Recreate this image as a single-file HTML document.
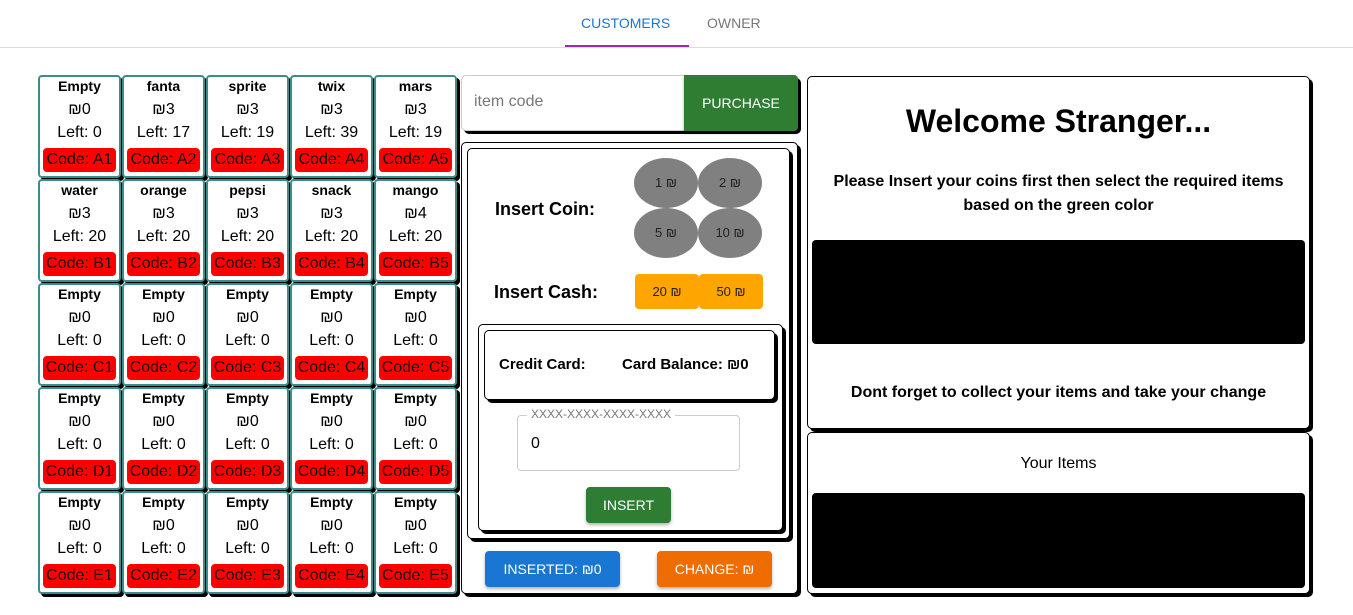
<!DOCTYPE html>
<html><head><meta charset="utf-8"><style>
*{box-sizing:border-box;margin:0;padding:0}
body{width:1353px;height:615px;background:#fff;font-family:"Liberation Sans",Arial,sans-serif;position:relative;overflow:hidden;color:#000}
.a{position:absolute}
.card{position:absolute;width:83px;height:103px;border:2px solid #3c8c8c;border-radius:4px;box-shadow:3px 3px 0 #000;background:#fff;text-align:center}
.card .t{position:absolute;top:1px;left:0;right:0;font-weight:bold;font-size:14px}
.card .p{position:absolute;top:24px;left:0;right:0;font-size:16px}
.card .l{position:absolute;top:47px;left:0;right:0;font-size:16px}
.card .c{position:absolute;top:71px;left:3px;right:3px;height:24px;background:#f00;border-radius:4px;font-size:16px;line-height:24px;color:#111;white-space:nowrap;overflow:hidden}
.box{position:absolute;border:1.5px solid #000;border-radius:5px;box-shadow:3px 3px 0 #000;background:#fff}
.coin{position:absolute;width:64px;height:50px;border-radius:50%;background:#808080;font-size:13px;text-align:center;line-height:50px;color:#222}
.cash{position:absolute;width:64px;height:35px;border-radius:4px;background:#ffa500;font-size:13px;text-align:center;line-height:35px;color:#222}
.btn{position:absolute;color:#fff;font-size:14px;text-align:center;border-radius:4px;box-shadow:0 2px 3px rgba(0,0,0,.3)}
</style></head><body>
<div class="a" style="left:581px;top:15px;font-size:14px;color:#1976d2">CUSTOMERS</div>
<div class="a" style="left:707px;top:15px;font-size:14px;color:#777">OWNER</div>
<div class="a" style="left:565px;top:45px;width:124px;height:2px;background:#9c27b0"></div>
<div class="a" style="left:0;top:47px;width:1353px;height:1px;background:#ddd"></div>

<div id="grid"></div>

<div class="box" style="left:461px;top:75px;width:337px;height:56px;border-width:1px;border-color:#ccc"></div>
<div class="a" style="left:474px;top:93px;font-size:16px;color:#777">item code</div>
<div class="btn" style="left:684px;top:75px;width:114px;height:56px;background:#2e7d32;line-height:56px;border-radius:0 4px 4px 0">PURCHASE</div>

<div class="box" style="left:461px;top:142px;width:337px;height:452px"></div>
<div class="box" style="left:467px;top:148px;width:323px;height:391px"></div>
<div class="a" style="left:495px;top:199px;font-size:18px;font-weight:bold">Insert Coin:</div>
<div class="coin" style="left:634px;top:158px">1 ₪</div>
<div class="coin" style="left:698px;top:158px">2 ₪</div>
<div class="coin" style="left:634px;top:208px">5 ₪</div>
<div class="coin" style="left:698px;top:208px">10 ₪</div>
<div class="a" style="left:494px;top:282px;font-size:18px;font-weight:bold">Insert Cash:</div>
<div class="cash" style="left:635px;top:274px">20 ₪</div>
<div class="cash" style="left:699px;top:274px">50 ₪</div>
<div class="box" style="left:478px;top:324px;width:305px;height:207px"></div>
<div class="box" style="left:484px;top:330px;width:291px;height:70px"></div>
<div class="a" style="left:499px;top:356px;font-size:15px;font-weight:bold">Credit Card:</div>
<div class="a" style="left:622px;top:356px;font-size:15px;font-weight:bold">Card Balance: ₪0</div>
<div class="a" style="left:517px;top:415px;width:223px;height:56px;border:1px solid #ccc;border-radius:4px"></div>
<div class="a" style="left:527px;top:407px;font-size:12px;color:#777;background:#fff;padding:0 4px">XXXX-XXXX-XXXX-XXXX</div>
<div class="a" style="left:531px;top:435px;font-size:16px">0</div>
<div class="btn" style="left:586px;top:487px;width:85px;height:36px;background:#2e7d32;line-height:36px">INSERT</div>
<div class="btn" style="left:485px;top:551px;width:135px;height:36px;background:#1976d2;line-height:36px">INSERTED: ₪0</div>
<div class="btn" style="left:657px;top:551px;width:115px;height:36px;background:#ef6c00;line-height:36px">CHANGE: ₪</div>

<div class="box" style="left:807px;top:76px;width:503px;height:353px"></div>
<div class="a" style="left:807px;top:103px;width:503px;text-align:center;font-size:32px;font-weight:bold">Welcome Stranger...</div>
<div class="a" style="left:820px;top:170px;width:477px;text-align:center;font-size:16px;font-weight:bold;line-height:24px">Please Insert your coins first then select the required items based on the green color</div>
<div class="a" style="left:812px;top:240px;width:493px;height:104px;background:#000;border-radius:4px"></div>
<div class="a" style="left:807px;top:384px;width:503px;text-align:center;font-size:16px;font-weight:bold">Dont forget to collect your items and take your change</div>
<div class="box" style="left:807px;top:432px;width:503px;height:162px"></div>
<div class="a" style="left:807px;top:455px;width:503px;text-align:center;font-size:16px">Your Items</div>
<div class="a" style="left:812px;top:493px;width:493px;height:95px;background:#000;border-radius:4px"></div>

<script>
var d=[["Empty",0,0],["fanta",3,17],["sprite",3,19],["twix",3,39],["mars",3,19],
["water",3,20],["orange",3,20],["pepsi",3,20],["snack",3,20],["mango",4,20]];
var h="",rows="ABCDE";
for(var r=0;r<5;r++)for(var c=0;c<5;c++){var it=d[r*5+c]||["Empty",0,0];
h+='<div class="card" style="left:'+(38+c*84)+'px;top:'+(75+r*104)+'px"><div class="t">'+it[0]+'</div><div class="p">₪'+it[1]+'</div><div class="l">Left: '+it[2]+'</div><div class="c">Code: '+rows[r]+(c+1)+'</div></div>';}
document.getElementById("grid").innerHTML=h;
</script>
</body></html>
